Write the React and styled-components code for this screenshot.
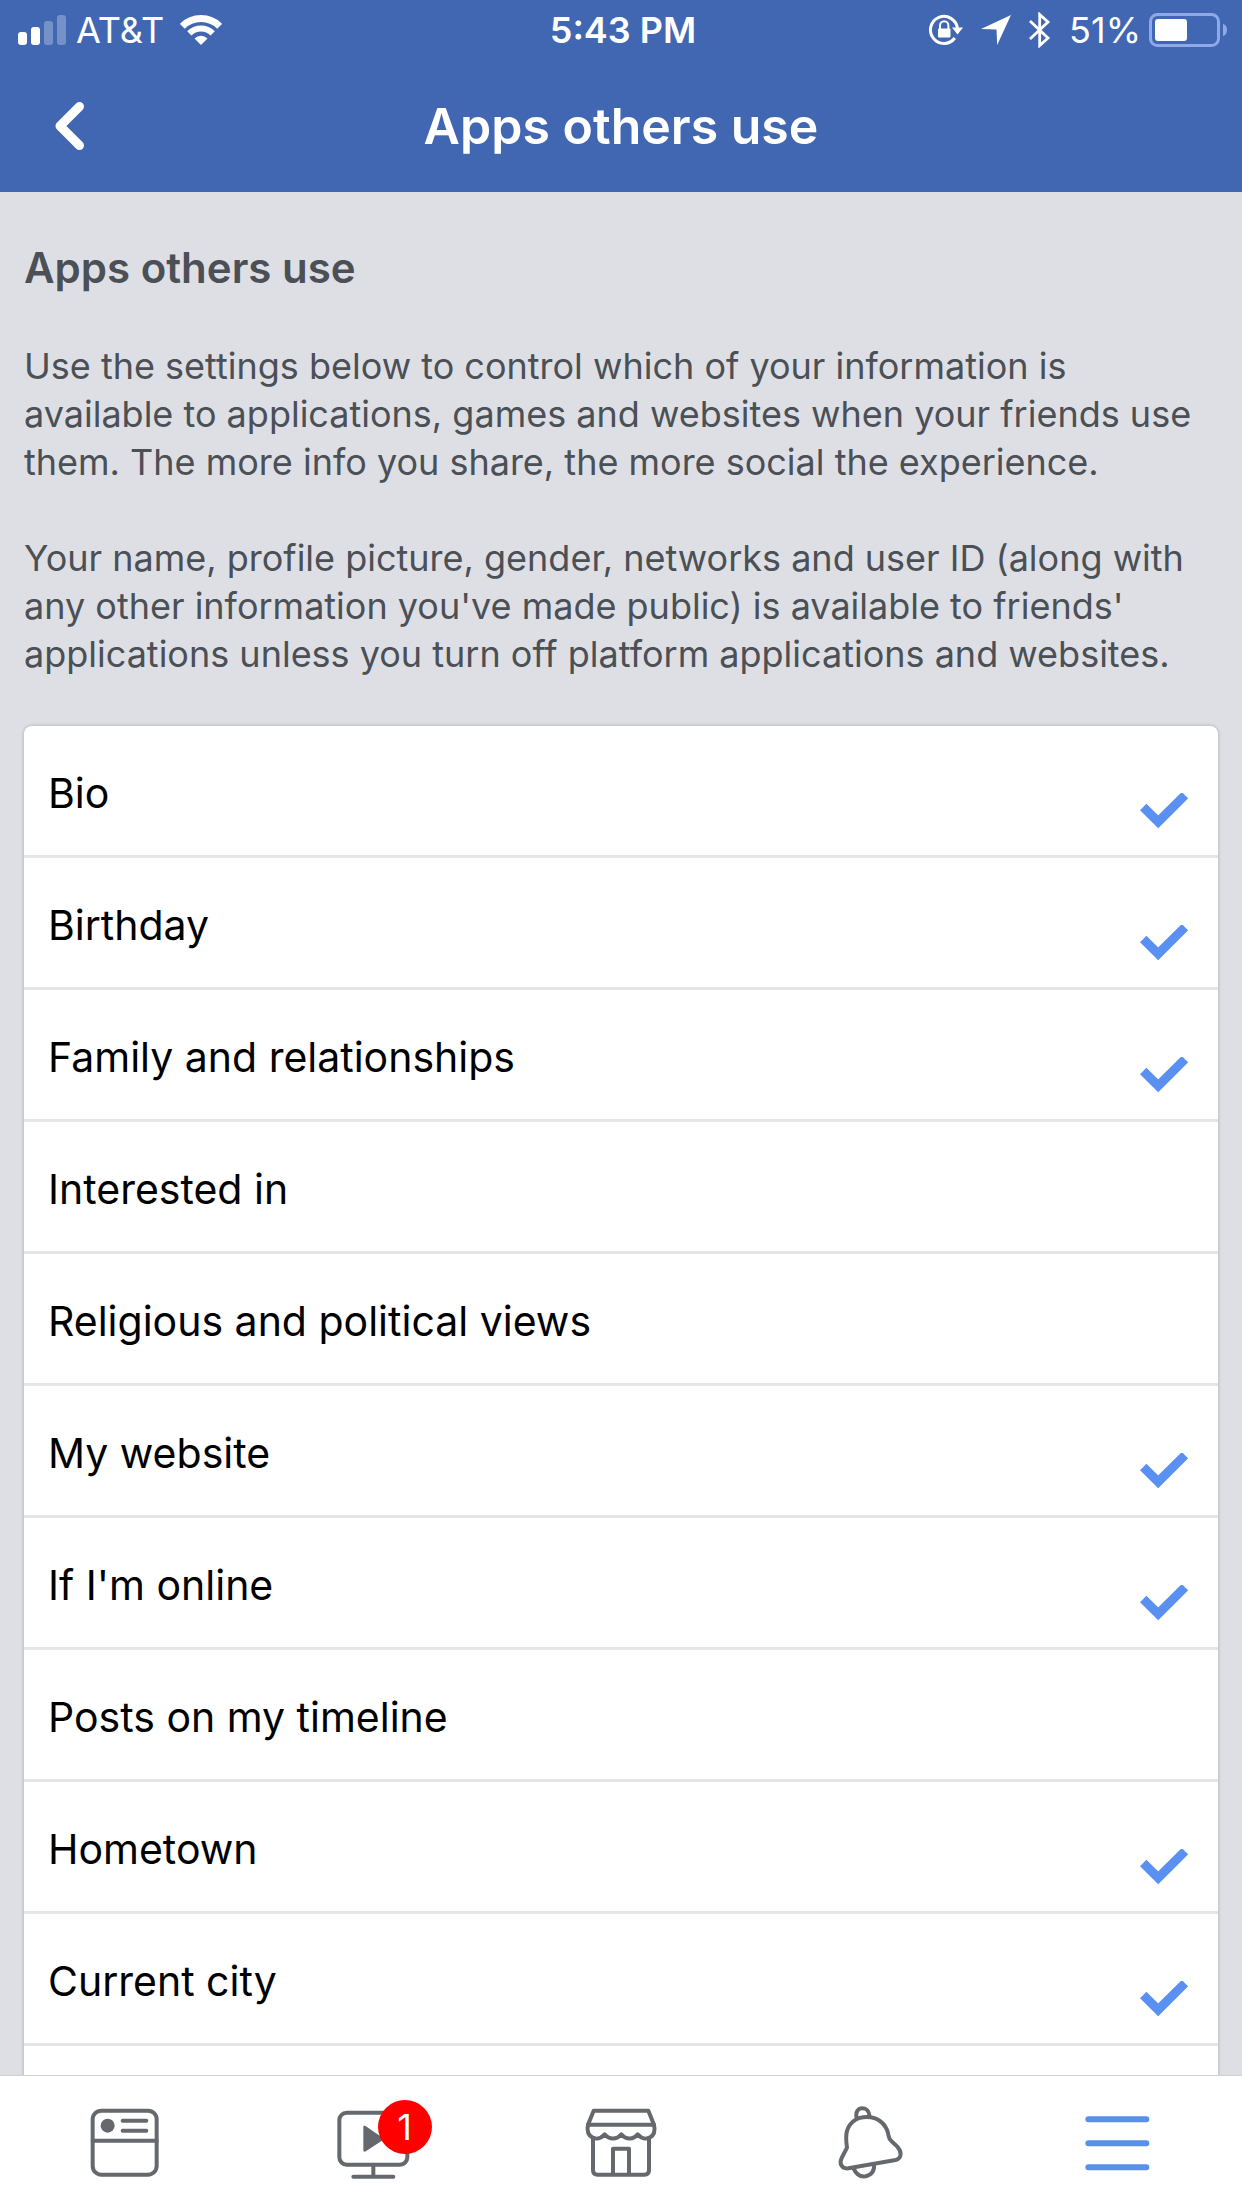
import React, { useState } from "react";
import styled, { createGlobalStyle } from "styled-components";

const settings = [
  { id: "bio", name: "Bio", shared: true },
  { id: "birthday", name: "Birthday", shared: true },
  { id: "family", name: "Family and relationships", shared: true },
  { id: "interested", name: "Interested in", shared: false },
  { id: "religion", name: "Religious and political views", shared: false },
  { id: "website", name: "My website", shared: true },
  { id: "online", name: "If I'm online", shared: true },
  { id: "posts", name: "Posts on my timeline", shared: false },
  { id: "hometown", name: "Hometown", shared: true },
  { id: "city", name: "Current city", shared: true },
];

const SignalIcon = () => (
  <svg width="48" height="30" viewBox="0 0 48 30" fill="#fff" aria-hidden="true">
    <rect x="0" y="17" width="9" height="13" rx="3" />
    <rect x="13" y="12" width="9" height="18" rx="3" />
    <rect x="26" y="6" width="9" height="24" rx="3" opacity="0.28" />
    <rect x="39" y="0" width="9" height="30" rx="3" opacity="0.28" />
  </svg>
);

const WifiIcon = () => (
  <svg width="42" height="30" viewBox="0 0 42 30" aria-hidden="true">
    <g fill="none" stroke="#fff">
      <path strokeWidth="7" d="M2.3 11.3A26.5 26.5 0 0 1 39.7 11.3" />
      <path strokeWidth="6" d="M9.3 18.3A16.5 16.5 0 0 1 32.7 18.3" />
    </g>
    <path fill="#fff" d="M21 30l-6.5-6.5a9.2 9.2 0 0 1 13 0z" />
  </svg>
);

const LockIcon = () => (
  <svg width="34" height="32" viewBox="0 0 34 32" aria-hidden="true">
    <path
      fill="none"
      stroke="#fff"
      strokeWidth="3"
      d="M28.4 14.5A13.5 13.5 0 1 0 25.8 24"
    />
    <path fill="#fff" d="M23 13.5h11l-5.5 7z" />
    <rect x="9" y="14.5" width="12.5" height="9" rx="1" fill="#fff" />
    <path
      fill="none"
      stroke="#fff"
      strokeWidth="2"
      d="M11 15v-3.5a4.2 4.2 0 0 1 8.4 0V15"
    />
  </svg>
);

const LocationIcon = () => (
  <svg width="30" height="30" viewBox="0 0 30 30" fill="#fff" aria-hidden="true">
    <path d="M30 0L16.2 30 15.5 14.5 0 14z" />
  </svg>
);

const BluetoothIcon = () => (
  <svg width="22" height="36" viewBox="0 0 22 36" aria-hidden="true">
    <path
      fill="none"
      stroke="#fff"
      strokeWidth="2.8"
      d="M1 9l18 17-8.3 7.5V2.5L19 10 1 27"
    />
  </svg>
);

const BatteryIcon = () => (
  <svg width="79" height="34" viewBox="0 0 79 34" aria-hidden="true">
    <rect
      x="1.5"
      y="1.5"
      width="68"
      height="31"
      rx="7"
      fill="none"
      stroke="#8ea9e6"
      strokeWidth="3"
    />
    <rect x="6" y="6" width="32" height="22" rx="3" fill="#fff" />
    <path fill="#8ea9e6" d="M74 11q4 1 4 6t-4 6z" />
  </svg>
);

const BackIcon = () => (
  <svg width="30" height="50" viewBox="0 0 30 50" aria-hidden="true">
    <path
      fill="none"
      stroke="#fff"
      strokeWidth="9"
      strokeLinecap="round"
      strokeLinejoin="round"
      d="M24.5 5.5L5 25l19.5 19.5"
    />
  </svg>
);

const FeedIcon = () => (
  <TabSvg viewBox="265 256 216 216">
    <rect x="279" y="270" width="192" height="192" rx="26" />
    <path d="M279 360H471M369 300H440M369 330H440" />
    <circle cx="324" cy="315" r="21" fill="currentColor" stroke="none" />
  </TabSvg>
);

const WatchIcon = () => (
  <TabSvg viewBox="1010 256 216 216">
    <rect x="1017" y="276" width="204" height="156" rx="22" />
    <path d="M1119 432V466M1059 468H1179" />
    <path
      d="M1093 319V389L1146 355Z"
      fill="currentColor"
      strokeWidth="8"
    />
  </TabSvg>
);

const StoreIcon = () => (
  <TabSvg viewBox="75 256 216 216">
    <path d="M84 312L101 270H265L282 312Z" />
    <path d="M84 312C76 352 112 366 134 341C148 358 170 358 184 341C198 358 220 358 233 341C255 366 291 352 282 312" />
    <path d="M99 352V448Q99 462 113 462H253Q267 462 267 448V352" />
    <path d="M159 460V384H207V460" />
  </TabSvg>
);

const BellIcon = () => (
  <TabSvg viewBox="820 256 216 216">
    <path d="M862 381C859 360 857 346 862 331C870 305 892 289 922 289C955 289 978 310 985 337C988 350 987 355 995 361L1012 377C1028 393 1026 414 1008 418L866 443C846 445 838 429 846 412Z" />
    <path d="M891 291C886 272 897 263 908 263C921 263 929 273 929 286" />
    <path d="M882 444C890 462 904 469 918 467C935 464 945 450 943 433" />
  </TabSvg>
);

const MenuIcon = () => (
  <TabSvg viewBox="125 497 216 216">
    <path strokeWidth="18" d="M144 537H318M144 609H318M144 681H318" />
  </TabSvg>
);

const tabs = [
  { id: "feed", label: "News Feed", Icon: FeedIcon },
  { id: "watch", label: "Watch", Icon: WatchIcon, count: 1 },
  { id: "store", label: "Marketplace", Icon: StoreIcon },
  { id: "alerts", label: "Notifications", Icon: BellIcon },
  { id: "menu", label: "Menu", Icon: MenuIcon },
];

const Setting = ({ id, name, shared }) => {
  const [checked, setChecked] = useState(shared);
  return (
    <Row htmlFor={id}>
      <RowName>{name}</RowName>
      <HiddenCheckbox
        id={id}
        type="checkbox"
        checked={checked}
        onChange={(e) => setChecked(e.target.checked)}
      />
      <CheckMark viewBox="0 0 48 36" aria-hidden="true">
        <path d="M3.2 14L18.2 28.8 45 2.2" />
      </CheckMark>
    </Row>
  );
};

const App = () => {
  const [active, setActive] = useState("menu");
  return (
    <Screen>
      <GlobalStyle />
      <Header>
        <StatusBar>
          <StatusGroup $gap={16}>
            <StatusGroup $gap={10}>
              <SignalIcon />
              <StatusText>AT&amp;T</StatusText>
            </StatusGroup>
            <WifiIcon />
          </StatusGroup>
          <StatusText $bold>5:43 PM</StatusText>
          <StatusGroup $gap={18} $end>
            <LockIcon />
            <LocationIcon />
            <BluetoothIcon />
            <StatusGroup $gap={8}>
              <StatusText>51%</StatusText>
              <BatteryIcon />
            </StatusGroup>
          </StatusGroup>
        </StatusBar>
        <TitleBar>
          <BackButton type="button" aria-label="Back">
            <BackIcon />
          </BackButton>
          <Title>Apps others use</Title>
        </TitleBar>
      </Header>
      <Content>
        <Heading>Apps others use</Heading>
        <Text>
          Use the settings below to control which of your information is
          available to applications, games and websites when your friends use
          them. The more info you share, the more social the experience.
        </Text>
        <Text>
          Your name, profile picture, gender, networks and user ID (along with
          any other information you've made public) is available to friends'
          applications unless you turn off platform applications and websites.
        </Text>
        <Card>
          {settings.map((item) => (
            <Setting key={item.id} {...item} />
          ))}
        </Card>
      </Content>
      <TabBar>
        {tabs.map(({ id, label, Icon, count }) => (
          <Tab
            key={id}
            type="button"
            aria-label={label}
            $active={active === id}
            onClick={() => setActive(id)}
          >
            <TabIcon>
              <Icon />
              {count && <Badge>{count}</Badge>}
            </TabIcon>
          </Tab>
        ))}
      </TabBar>
    </Screen>
  );
};

export default App;

const GlobalStyle = createGlobalStyle`
  * {
    box-sizing: border-box;
  }
  body {
    margin: 0;
    font-family: Inter, "Liberation Sans", sans-serif;
    background: #dedfe4;
  }
  svg {
    display: block;
    flex-shrink: 0;
  }
  button {
    padding: 0;
    border: 0;
    background: none;
    font: inherit;
    cursor: pointer;
  }
`;

const Screen = styled.div`
  display: flex;
  flex-direction: column;
  height: 100vh;
`;

const Header = styled.header`
  background: #4267b2;
  color: #fff;
`;

const StatusBar = styled.div`
  display: grid;
  grid-template-columns: 1fr auto 1fr;
  align-items: center;
  padding: 10px 14px 10px 18px;
`;

const StatusGroup = styled.div`
  display: flex;
  align-items: center;
  justify-content: ${(props) => (props.$end ? "flex-end" : "flex-start")};
  gap: ${(props) => props.$gap}px;
`;

const StatusText = styled.span`
  font-size: 36px;
  line-height: 40px;
  font-weight: ${(props) => (props.$bold ? 600 : 400)};
`;

const TitleBar = styled.div`
  display: grid;
  grid-template-columns: 1fr auto 1fr;
  align-items: center;
  padding: 36px 55px;
`;

const BackButton = styled.button`
  justify-self: start;
`;

const Title = styled.h1`
  margin: 0;
  font-size: 50px;
  line-height: 60px;
  font-weight: 600;
`;

const Content = styled.main`
  flex: 1;
  min-height: 0;
  display: flex;
  flex-direction: column;
  padding: 48px 24px 0;
  overflow-y: auto;
  scrollbar-width: none;
  color: #4b4f56;
`;

const Heading = styled.h2`
  margin: 0 0 46px;
  font-size: 42px;
  line-height: 56px;
  font-weight: 600;
`;

const Text = styled.p`
  margin: 0 0 48px;
  font-size: 36px;
  line-height: 48px;
`;

const Card = styled.section`
  flex: 1 0 auto;
  background: #fff;
  border-radius: 8px 8px 0 0;
  box-shadow: 0 0 3px 1px rgba(0, 0, 0, 0.15);
`;

const Row = styled.label`
  display: flex;
  align-items: flex-end;
  justify-content: space-between;
  padding: 31px 30px 26px 24px;
  border-bottom: 3px solid #e5e5e6;
  color: #000;
  cursor: pointer;
`;

const RowName = styled.span`
  font-size: 41px;
  line-height: 72px;
`;

const CheckMark = styled.svg`
  width: 48px;
  height: 36px;
  fill: none;
  stroke: #5a90f2;
  stroke-width: 9;
  visibility: hidden;
`;

const HiddenCheckbox = styled.input`
  appearance: none;
  width: 0;
  height: 0;
  margin: 0 0 0 auto;

  &:checked + ${CheckMark} {
    visibility: visible;
  }
`;

const TabBar = styled.nav`
  display: grid;
  grid-template-columns: repeat(5, 1fr);
  padding: 30px 0;
  background: #fff;
  border-top: 1px solid #d0d1d5;
`;

const Tab = styled.button`
  display: flex;
  align-items: center;
  justify-content: center;
  color: ${(props) => (props.$active ? "#5a90ec" : "#65686c")};
`;

const TabIcon = styled.span`
  position: relative;
`;

const TabSvg = styled.svg`
  width: 72px;
  height: 72px;
  overflow: visible;
  fill: none;
  stroke: currentColor;
  stroke-width: 12px;
  stroke-linecap: round;
  stroke-linejoin: round;
`;

const Badge = styled.span`
  position: absolute;
  top: -6px;
  left: 41px;
  width: 54px;
  height: 54px;
  border-radius: 50%;
  background: #fe0000;
  color: #fff;
  font-size: 36px;
  line-height: 54px;
  text-align: center;
`;
